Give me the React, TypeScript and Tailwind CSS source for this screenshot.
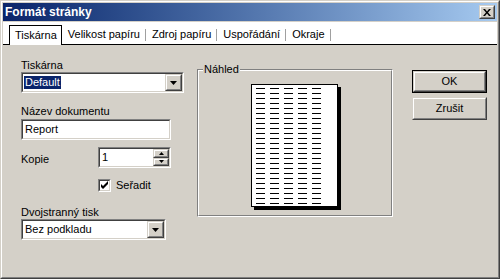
import type { ReactNode } from "react";

// Classic Win2000 bevels
function Sunken({ className = "", children }: { className?: string; children?: ReactNode }) {
  return (
    <div className={`border border-t-[#808080] border-l-[#808080] border-b-white border-r-white ${className}`}>
      <div className="h-full border border-t-[#404040] border-l-[#404040] border-b-[#d4d0c8] border-r-[#d4d0c8] bg-white flex items-center">
        {children}
      </div>
    </div>
  );
}

function Raised({ className = "", children }: { className?: string; children?: ReactNode }) {
  return (
    <div className={`border border-t-[#d4d0c8] border-l-[#d4d0c8] border-b-[#404040] border-r-[#404040] ${className}`}>
      <div className="h-full border border-t-white border-l-white border-b-[#808080] border-r-[#808080] bg-[#d4d0c8] flex items-center justify-center">
        {children}
      </div>
    </div>
  );
}

function DownArrow() {
  return (
    <svg width="7" height="4" viewBox="0 0 7 4">
      <path d="M0 0h7L3.5 4z" fill="#000" />
    </svg>
  );
}

function Combo({ width, value, selected }: { width: string; value: string; selected?: boolean }) {
  return (
    <Sunken className={`${width} h-[21px]`}>
      <div className="flex-1 pl-px">
        <span className={selected ? "bg-[#0a246a] text-white px-px leading-[13px] inline-block" : "px-px"}>{value}</span>
      </div>
      <Raised className="w-[17px] h-full">
        <DownArrow />
      </Raised>
    </Sunken>
  );
}

const tabs = ["Velikost papíru", "Zdroj papíru", "Uspořádání", "Okraje"];

export default function App() {
  return (
    <div className="w-[500px] h-[279px] bg-[#d4d0c8] border border-t-[#d4d0c8] border-l-[#d4d0c8] border-r-[#404040] border-b-[#404040] text-[11px] leading-[13px] text-black font-['Liberation_Sans',Arial,sans-serif]">
      <div className="h-full border border-t-white border-l-white border-r-[#808080] border-b-[#808080] p-px flex flex-col">
        {/* title bar */}
        <div className="h-[18px] flex items-center justify-between pl-[2px] pr-[2px] bg-gradient-to-r from-[#0a246a] to-[#a6caf0]">
          <span className="text-white font-bold text-[12px]">Formát stránky</span>
          <Raised className="w-[16px] h-[14px]">
            <svg width="8" height="7" viewBox="0 0 8 7">
              <path d="M0 0h2l2 2.5L6 0h2L5 3.5 8 7H6L4 4.5 2 7H0l3-3.5z" fill="#000" />
            </svg>
          </Raised>
        </div>

        {/* tab strip */}
        <div className="mt-px h-[23px] flex bg-white">
          <div className="w-[6px] border-b border-black" />
          <div className="self-end h-[20px] border-t border-l border-r border-black pl-[5px] pr-[4px] flex items-center">
            Tiskárna
          </div>
          <div className="flex-1 border-b border-black flex items-center pt-[3px]">
            {tabs.map((t) => (
              <div key={t} className="flex items-center">
                <span className="pl-[6px] pr-[5px]">{t}</span>
                <span className="w-px h-[12px] bg-[#a0a0a0]" />
              </div>
            ))}
          </div>
        </div>

        {/* body */}
        <div className="flex-1 flex pl-[18px]">
          <div className="w-[163px] pt-[14px] flex flex-col">
            <div>Tiskárna</div>
            <Combo width="w-[163px]" value="Default" selected />
            <div className="mt-[12px]">Název dokumentu</div>
            <Sunken className="mt-px w-[150px] h-[21px]">
              <span className="pl-[2px]">Report</span>
            </Sunken>
            <div className="mt-[7px] flex items-center">
              <span className="w-[77px] pt-[4px]">Kopie</span>
              <Sunken className="w-[73px] h-[21px]">
                <span className="flex-1 pl-[2px]">1</span>
                <div className="w-[16px] h-full flex flex-col">
                  <Raised className="h-1/2 w-full">
                    <svg width="5" height="3" viewBox="0 0 5 3">
                      <path d="M2.5 0L5 3H0z" fill="#000" />
                    </svg>
                  </Raised>
                  <Raised className="h-1/2 w-full">
                    <svg width="5" height="3" viewBox="0 0 5 3">
                      <path d="M0 0h5L2.5 3z" fill="#000" />
                    </svg>
                  </Raised>
                </div>
              </Sunken>
            </div>
            <div className="mt-[11px] ml-[77px] flex items-center">
              <Sunken className="w-[13px] h-[13px]">
                <svg width="9" height="9" viewBox="0 0 9 9">
                  <path d="M1 3v3l2 2 5-5V0L3 5z" fill="#000" />
                </svg>
              </Sunken>
              <span className="ml-[5px]">Seřadit</span>
            </div>
            <div className="mt-[14px]">Dvojstranný tisk</div>
            <Combo width="w-[145px]" value="Bez podkladu" />
          </div>

          {/* preview group */}
          <div className="ml-[13px] mt-[24px] w-[196px] h-[148px] relative border border-t-[#808080] border-l-[#808080] border-r-white border-b-white">
            <div className="h-full border border-t-white border-l-white border-r-[#808080] border-b-[#808080] flex justify-center pt-[13px] pr-px">
              <div className="w-[87px] h-[123px] bg-white border border-black shadow-[3px_3px_0_#000]">
                <svg width="85" height="121" viewBox="0 0 85 121">
                  {Array.from({ length: 24 }).map((_, r) =>
                    [4, 18, 32, 46, 60].map((x) => (
                      <rect key={`${r}-${x}`} x={x} y={3 + r * 5} width="9" height="1" fill="#000" />
                    ))
                  )}
                </svg>
              </div>
            </div>
            <span className="absolute left-[5px] -top-[7px] bg-[#d4d0c8] px-px">Náhled</span>
          </div>

          {/* buttons */}
          <div className="ml-[19px] mt-[25px] flex flex-col gap-[4px]">
            <div className="w-[75px] h-[23px] border border-black">
              <Raised className="w-full h-full">OK</Raised>
            </div>
            <Raised className="w-[75px] h-[23px]">Zrušit</Raised>
          </div>
        </div>
      </div>
    </div>
  );
}
